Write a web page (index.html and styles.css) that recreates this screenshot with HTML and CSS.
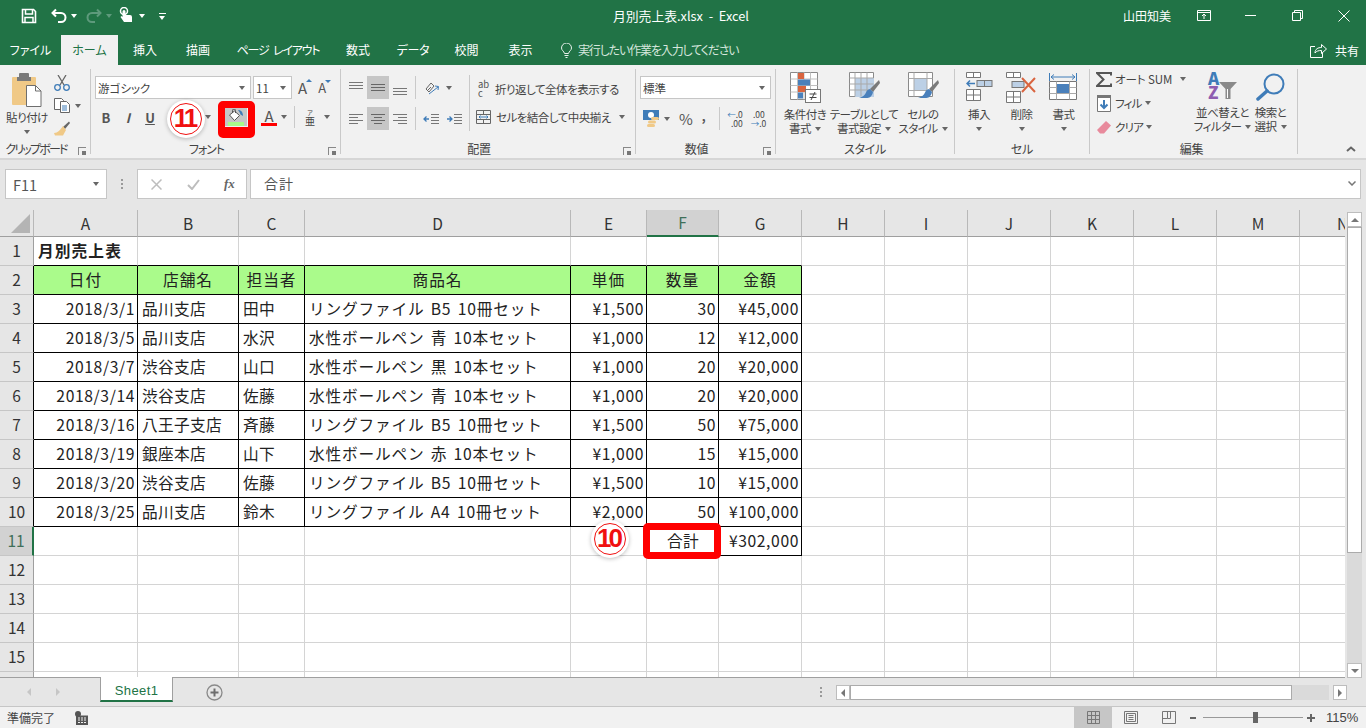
FILE: index.html
```html
<!DOCTYPE html>
<html lang="ja">
<head>
    <meta charset="UTF-8">
    <title>月別売上表.xlsx - Excel</title>
    <link rel="stylesheet" href="styles.css">
</head>
<body>
    <div class="titlebar">
        <div class="qat">
            <svg class="q-save" width="16" height="16" viewBox="0 0 16 16"><path d="M1.500 1.500h11l2 2v11h-13z" fill="none" stroke="#fff" stroke-width="1.600"/><path d="M4.500 2v4h7V2M4 14.500V9.500h8v5" fill="none" stroke="#fff" stroke-width="1.500"/></svg>
            <svg class="q-undo" width="16" height="15" viewBox="0 0 16 15"><path d="M5 1.500 1.500 5 5 8.500M2 5h8a4.500 4.500 0 0 1 0 9H7" fill="none" stroke="#fff" stroke-width="2"/></svg>
            <span class="caret white q-c1"></span>
            <svg class="q-redo" width="16" height="15" viewBox="0 0 16 15"><path d="M11 1.500 14.500 5 11 8.500M14 5H6a4.500 4.500 0 0 0 0 9h3" fill="none" stroke="#5e9a7c" stroke-width="2"/></svg>
            <span class="caret dim q-c2"></span>
            <svg class="q-touch" width="15" height="17" viewBox="0 0 15 17"><circle cx="5" cy="4" r="3.500" fill="none" stroke="#fff" stroke-width="1.500"/><path d="M3.500 4.500a1.500 1.500 0 0 1 3 0V8h4.500a2 2 0 0 1 2 2v5H5L1.500 10l1-1 1 1z" fill="#fff"/></svg>
            <span class="caret white q-c3"></span>
            <span class="q-more"></span>
        </div>
        <div class="doc-title">月別売上表.xlsx&nbsp; - &nbsp;Excel</div>
        <div class="win">
            <span class="user">山田知美</span>
            <svg class="w-ribbon" width="14" height="11" viewBox="0 0 14 11"><path d="M.5.500h13v10H.5zM.5 2.500h13M7 9V4.500M5 6l2-2 2 2" fill="none" stroke="#fff"/></svg>
            <svg class="w-min" width="11" height="11" viewBox="0 0 11 11"><path d="M0 5.500h11" stroke="#fff"/></svg>
            <svg class="w-max" width="11" height="11" viewBox="0 0 11 11"><path d="M.5 2.500h8v8h-8zM2.500 2.500v-2h8v8h-2" fill="none" stroke="#fff"/></svg>
            <svg class="w-close" width="12" height="12" viewBox="0 0 12 12"><path d="M.5.500l11 11M11.500.500l-11 11" stroke="#fff"/></svg>
        </div>
    </div>

    <div class="tabs">
        <span class="tab t-file">ファイル</span>
        <span class="tab active t-home">ホーム</span>
        <span class="tab t-ins">挿入</span>
        <span class="tab t-draw">描画</span>
        <span class="tab t-page">ページ レイアウト</span>
        <span class="tab t-calc">数式</span>
        <span class="tab t-data">データ</span>
        <span class="tab t-rev">校閲</span>
        <span class="tab t-view">表示</span>
        <svg class="bulb" width="11" height="15" viewBox="0 0 11 15"><path d="M3.500 10.500C3 8 .5 7.500.5 5a5 5 0 0 1 10 0c0 2.500-2.500 3-3 5.500zM3.500 12.500h4M4.500 14.500h2" fill="none" stroke="#fff"/></svg>
        <span class="tell">実行したい作業を入力してください</span>
        <span class="share">
            <svg width="17" height="15" viewBox="0 0 17 15"><path d="M5 3.500H.5v11h12V10M5 10c0-4 3-5.500 6.500-5.500V1.500l5 4.500-5 4.500V7.500C8.500 7.500 6.500 8 5 10z" fill="none" stroke="#fff"/></svg>
            共有
        </span>
    </div>

    <div class="ribbon">
        <div class="group g-clip">
            <div class="g-body">
                <div class="paste">
                    <svg width="30" height="34" viewBox="0 0 30 34"><rect x="0" y="4" width="24" height="28" rx="1" fill="#f0c987"/><rect x="7" y="0" width="10" height="7" rx="1" fill="#7a7a7a"/><rect x="5" y="4" width="14" height="4" fill="#7a7a7a"/><path d="M14.500 12.500h9l5.500 5.500v15.500H14.500z" fill="#fff" stroke="#6e6e6e"/><path d="M23.500 12.500V18H29" fill="none" stroke="#6e6e6e"/></svg>
                    <span class="big-text">貼り付け</span>
                    <span class="caret"></span>
                </div>
                <div class="clip-tools">
                    <div class="clip-row"><svg width="16" height="16" viewBox="0 0 16 16"><path d="M4 0l6 10M12 0L6 10" stroke="#666" stroke-width="1.300" fill="none"/><circle cx="3.500" cy="12.500" r="2.800" fill="none" stroke="#3f7cb8" stroke-width="1.300"/><circle cx="12.500" cy="12.500" r="2.800" fill="none" stroke="#3f7cb8" stroke-width="1.300"/></svg></div>
                    <div class="clip-row"><svg width="16" height="15" viewBox="0 0 16 15"><path d="M.5.500h7l2 2v9H.5z" fill="#fff" stroke="#666"/><path d="M6.500 3.500h6l3 3v8h-9z" fill="#fff" stroke="#666"/><path d="M8 8h5M8 10h5M8 12h5" stroke="#3f7cb8"/></svg><span class="caret c-copy"></span></div>
                    <div class="clip-row"><svg width="16" height="15" viewBox="0 0 16 15"><path d="M9 6L15 .5l1 1.500L11 8z" fill="#666"/><path d="M9 5l3 4-3 5.500H1L0 12c4 0 6-3 9-7z" fill="#f0c987"/></svg></div>
                </div>
            </div>
            <div class="g-label has-launcher tight">クリップボード<span class="launcher"></span></div>
        </div>

        <div class="group g-font">
            <div class="g-body col">
                <div class="row r1">
                    <div class="select s-name"><span>游ゴシック</span><span class="caret"></span></div>
                    <div class="select s-size"><span>11</span><span class="caret"></span></div>
                    <span class="grow-a">A<i class="up"></i></span>
                    <span class="shrink-a">A<i class="down"></i></span>
                </div>
                <div class="row r2">
                    <span class="fbtn bold">B</span>
                    <span class="fbtn ital">I</span>
                    <span class="fbtn under">U</span>
                    <span class="border-slot"></span>
                    <span class="caret c-border"></span>
                    <div class="fill-btn">
                        <svg width="16" height="13" viewBox="0 0 16 13"><path d="M1.500 6 6.500 2l5 4.500-5 5z" fill="#fff" stroke="#555"/><path d="M4.500 4V1.500a1.500 1.500 0 0 1 3 0V4" fill="none" stroke="#555"/><path d="M10 1c3 0 5 2 5 6l-2.500-1.500C12 3.500 11 2.500 10 1z" fill="#3f7cb8"/></svg>
                        <span class="fill-bar"></span>
                    </div>
                    <span class="font-color">A</span>
                    <span class="caret c-fc"></span>
                    <span class="vsep s-f"></span>
                    <span class="phon">亜<i>ア</i></span>
                    <span class="caret c-ph"></span>
                </div>
            </div>
            <div class="g-label has-launcher">フォント<span class="launcher"></span></div>
        </div>

        <div class="group g-align">
            <div class="g-body">
                <div class="col a-left">
                    <div class="row a-r1">
                        <span class="abtn"><svg width="14" height="14" viewBox="0 0 14 14"><path d="M0 1.500h14M0 4.500h14M0 7.500h14" stroke="#777"/></svg></span>
                        <span class="abtn on"><svg width="14" height="14" viewBox="0 0 14 14"><path d="M0 3.500h14M0 6.500h14M0 9.500h14" stroke="#666"/></svg></span>
                        <span class="abtn"><svg width="14" height="14" viewBox="0 0 14 14"><path d="M0 7.500h14M0 10.500h14M0 13.500h14" stroke="#777"/></svg></span>
                        <span class="vsep s-a"></span>
                        <svg class="orient" width="18" height="18" viewBox="0 0 18 18"><path d="M3 10l5-6 3 3-5 6zM5 11l3-3" fill="none" stroke="#666"/><path d="M6 15l9-7M12 7l3.500.5-.5 3.500" fill="none" stroke="#3f7cb8"/></svg>
                        <span class="caret c-or"></span>
                    </div>
                    <div class="row a-r2">
                        <span class="abtn"><svg width="14" height="12" viewBox="0 0 14 12"><path d="M0 1.500h14M0 4.500h9M0 7.500h14M0 10.500h9" stroke="#777"/></svg></span>
                        <span class="abtn on"><svg width="14" height="12" viewBox="0 0 14 12"><path d="M0 1.500h14M3 4.500h8M0 7.500h14M3 10.500h8" stroke="#666"/></svg></span>
                        <span class="abtn"><svg width="14" height="12" viewBox="0 0 14 12"><path d="M0 1.500h14M5 4.500h9M0 7.500h14M5 10.500h9" stroke="#777"/></svg></span>
                        <span class="vsep s-a"></span>
                        <svg class="ind1" width="16" height="12" viewBox="0 0 16 12"><path d="M8 1.500h8M8 4.500h8M8 7.500h8M8 10.500h8" stroke="#777"/><path d="M6 6H1M3.500 3.500 1 6l2.500 2.500" fill="none" stroke="#3f7cb8" stroke-width="1.300"/></svg>
                        <svg class="ind2" width="16" height="12" viewBox="0 0 16 12"><path d="M8 1.500h8M8 4.500h8M8 7.500h8M8 10.500h8" stroke="#777"/><path d="M1 6h5M3.500 3.500 6 6 3.500 8.500" fill="none" stroke="#3f7cb8" stroke-width="1.300"/></svg>
                    </div>
                </div>
                <div class="col a-right">
                    <div class="wrap-row"><span class="abc">ab<br>c</span><span class="r-text">折り返して全体を表示する</span></div>
                    <div class="merge-row"><svg width="15" height="14" viewBox="0 0 15 14"><path d="M.5.500h14v13H.5zM.5 4.500h14M.5 9.500h14M7.500.500v4M7.500 9.500v4" fill="none" stroke="#666"/><path d="M3 7h9M4.500 5.500 3 7l1.500 1.500M10.500 5.500 12 7l-1.500 1.500" fill="none" stroke="#3f7cb8"/></svg><span class="r-text">セルを結合して中央揃え</span><span class="caret c-merge"></span></div>
                </div>
            </div>
            <div class="g-label has-launcher">配置<span class="launcher"></span></div>
        </div>

        <div class="group g-num">
            <div class="g-body col">
                <div class="row r1">
                    <div class="select s-fmt"><span>標準</span><span class="caret"></span></div>
                </div>
                <div class="row n-r2">
                    <svg class="money" width="17" height="17" viewBox="0 0 17 17"><path d="M0 0h16v10H0z" fill="#3f7cb8"/><circle cx="8" cy="5" r="3" fill="#fff"/><rect x="8" y="7" width="8" height="3" rx="1.500" fill="#f0c987"/><rect x="5" y="10.500" width="8" height="3" rx="1.500" fill="#f0c987"/><rect x="4" y="14" width="8" height="3" rx="1.500" fill="#f0c987"/></svg>
                    <span class="caret c-money"></span>
                    <span class="pct">%</span>
                    <span class="comma">,</span>
                    <span class="vsep s-n"></span>
                    <span class="dec d1"><i class="arrow-l">←</i>.0<br>.00</span>
                    <span class="dec d2">.00<br><i class="arrow-r">→</i>.0</span>
                </div>
            </div>
            <div class="g-label has-launcher">数値<span class="launcher"></span></div>
        </div>

        <div class="group g-style">
            <div class="g-body">
                <div class="big b-cond">
                    <svg width="31" height="31" viewBox="0 0 31 31"><path d="M.5.500h27v27H.5z" fill="#fff" stroke="#8a8a8a"/><path d="M.5 7h27M.5 13.500h27M.5 20h27M7.500.500v27M14 .500v27M20.500.500v27" stroke="#c0c0c0"/><rect x="8" y="1" width="6" height="6" fill="#d9643f"/><rect x="8" y="7.500" width="12" height="6" fill="#4a80bb"/><rect x="8" y="14" width="8" height="6" fill="#d9643f"/><rect x="8" y="20.500" width="5" height="6" fill="#4a80bb"/><rect x="15.500" y="17.500" width="15" height="13" fill="#fff" stroke="#777"/><path d="M19.500 22h7M19.500 25.500h7M25 20l-4 8" stroke="#444"/></svg>
                    <span class="big-text">条件付き<br>書式<span class="caret inl"></span></span>
                </div>
                <div class="big b-table">
                    <svg width="31" height="31" viewBox="0 0 31 31"><path d="M.5.500h24v24H.5z" fill="#fff" stroke="#8a8a8a"/><rect x="6" y="6" width="19" height="19" fill="#bcd0e6"/><path d="M.5 6h24M.5 12h24M.5 18h24M6 .500v24M12 .500v24M18 .500v24" stroke="#a9a9a9"/><path d="M30 8l-9 9 3 3 7-9z" fill="#7a7a7a"/><path d="M21 17l3 3c-1 5-4 6-6.500 6H10c4-1 6-3 7-5.500 1-2.500 2-3 4-3.500z" fill="#4a80bb"/></svg>
                    <span class="big-text">テーブルとして<br>書式設定<span class="caret inl"></span></span>
                </div>
                <div class="big b-cell">
                    <svg width="31" height="31" viewBox="0 0 31 31"><path d="M.5.500h24v24H.5z" fill="#fff" stroke="#8a8a8a"/><rect x="6" y="7" width="13" height="11" fill="#bcd0e6"/><path d="M6 .500v24M.5 6.500h24M.5 18.500h24M19 .500v24" stroke="#a9a9a9"/><path d="M30 8l-9 9 3 3 7-9z" fill="#7a7a7a"/><path d="M21 17l3 3c-1 5-4 6-6.500 6H10c4-1 6-3 7-5.500 1-2.500 2-3 4-3.500z" fill="#4a80bb"/></svg>
                    <span class="big-text">セルの<br>スタイル<span class="caret inl"></span></span>
                </div>
            </div>
            <div class="g-label">スタイル</div>
        </div>

        <div class="group g-cell">
            <div class="g-body">
                <div class="big b-ins">
                    <svg width="27" height="31" viewBox="0 0 27 31"><path d="M.5.500h14v5H.5zM7.500.500v5M.5 17.500h14v11H.5zM.5 23h14M7.500 17.500v11" fill="#fff" stroke="#777"/><rect x="11" y="8.500" width="15" height="6" fill="#bcd0e6" stroke="#777"/><path d="M18.500 8.500v6" stroke="#777"/><path d="M9 11.500H1M4 8.500l-3 3 3 3" fill="none" stroke="#3f7cb8" stroke-width="1.500"/></svg>
                    <span class="big-text">挿入</span>
                    <span class="caret"></span>
                </div>
                <div class="big b-del">
                    <svg width="31" height="31" viewBox="0 0 31 31"><path d="M.5.500h14v5H.5zM7.500.500v5M.5 19.500h14v11H.5zM.5 25h14M7.500 19.500v11" fill="#fff" stroke="#777"/><rect x="6" y="9.500" width="12" height="6" fill="#bcd0e6" stroke="#777"/><path d="M16 6l13 14M29 6L16 20" stroke="#d9643f" stroke-width="2"/></svg>
                    <span class="big-text">削除</span>
                    <span class="caret"></span>
                </div>
                <div class="big b-fmt">
                    <svg width="29" height="31" viewBox="0 0 29 31"><path d="M2 5h24M2 5l3-2.500M2 5l3 2.500M26 5l-3-2.500M26 5l-3 2.500" fill="none" stroke="#3f7cb8"/><path d="M.5 1v8M27.500 1v8" stroke="#3f7cb8"/><path d="M.5 9.500h27v18H.5z" fill="#fff" stroke="#777"/><path d="M7.500 9.500v18M20.500 9.500v18M.5 15.500h27M.5 21.500h27" stroke="#a9a9a9"/><rect x="8" y="12" width="12" height="9" fill="#4a80bb"/></svg>
                    <span class="big-text">書式</span>
                    <span class="caret"></span>
                </div>
            </div>
            <div class="g-label">セル</div>
        </div>

        <div class="group g-edit">
            <div class="g-body">
                <div class="edit-col">
                    <div class="edit-row"><svg width="16" height="15" viewBox="0 0 16 15"><path d="M15 3.500V1H1l6.500 6.500L1 14h14v-2.500" fill="none" stroke="#555" stroke-width="2"/></svg><span class="e-text">オート SUM</span><span class="caret c-sum"></span></div>
                    <div class="edit-row"><svg width="14" height="17" viewBox="0 0 14 17"><path d="M.5.500h13v16H.5z" fill="#fff" stroke="#777"/><rect x="0" y="0" width="14" height="3" fill="#777"/><path d="M7 5v8M3.500 9.500 7 13l3.500-3.500" fill="none" stroke="#3f7cb8" stroke-width="2"/></svg><span class="e-text short">フィル</span><span class="caret c-ef"></span></div>
                    <div class="edit-row"><svg width="14" height="13" viewBox="0 0 14 13"><path d="M0 9l9-9 5 4.500-7 8H3z" fill="#e88a9c"/></svg><span class="e-text short">クリア</span><span class="caret c-ef"></span></div>
                </div>
                <div class="big b-sort">
                    <div class="sort-ico"><span class="az"><b class="a">A</b><b class="z">Z</b></span><svg width="18" height="17" viewBox="0 0 18 17"><path d="M0 0h18l-6.500 7v10h-5V7z" fill="#8a8a8a"/><path d="M8.500 7v9" stroke="#fff"/></svg></div>
                    <span class="big-text">並べ替えと<br>フィルター<span class="caret inl"></span></span>
                </div>
                <div class="big b-find">
                    <svg width="29" height="28" viewBox="0 0 29 28"><circle cx="18" cy="11" r="9.500" fill="none" stroke="#3f7cb8" stroke-width="2"/><path d="M11 18 2 26" stroke="#3f7cb8" stroke-width="3.500" stroke-linecap="round"/></svg>
                    <span class="big-text">検索と<br>選択<span class="caret inl"></span></span>
                </div>
            </div>
            <div class="g-label">編集</div>
        </div>
        <svg class="collapse" width="10" height="6" viewBox="0 0 10 6"><path d="M1 5l4-3.500L9 5" fill="none" stroke="#666" stroke-width="2"/></svg>
    </div>

    <div class="formula">
        <div class="namebox"><span>F11</span><span class="caret"></span></div>
        <span class="grip"></span>
        <div class="fx-btns">
            <svg width="11" height="11" viewBox="0 0 11 11"><path d="M.5.500l10 10M10.500.500l-10 10" stroke="#bdbdbd" stroke-width="1.500"/></svg>
            <svg width="13" height="11" viewBox="0 0 13 11"><path d="M1 6l4 4 7-9" fill="none" stroke="#bdbdbd" stroke-width="2"/></svg>
            <span class="fx">fx</span>
        </div>
        <div class="fbar"><span>合計</span><svg width="8" height="5" viewBox="0 0 8 5"><path d="M.5.500 4 4 7.500.500" fill="none" stroke="#777" stroke-width="1.500"/></svg></div>
    </div>

    <div class="sheet-area">
        <div class="sheet">
            <table>
                <colgroup>
                    <col class="w-rh"><col class="w-a"><col class="w-b"><col class="w-c"><col class="w-d"><col class="w-e"><col class="w-f"><col class="w-g">
                    <col class="w-x"><col class="w-x"><col class="w-x"><col class="w-x"><col class="w-x"><col class="w-x"><col class="w-n">
                </colgroup>
                <thead>
                    <tr>
                        <th class="corner"><span class="tri"></span></th>
                        <th>A</th><th>B</th><th>C</th><th>D</th><th>E</th><th class="cur-col">F</th><th>G</th>
                        <th>H</th><th>I</th><th>J</th><th>K</th><th>L</th><th>M</th><th class="col-n">N</th>
                    </tr>
                </thead>
                <tbody>
                    <tr><th class="rh">1</th><td class="bb title-cell">月別売上表</td><td class="bb"></td><td class="bb"></td><td class="bb"></td><td class="bb"></td><td class="bb"></td><td class="bb"></td><td></td><td></td><td></td><td></td><td></td><td></td><td class="last"></td></tr>
                    <tr class="head"><th class="rh bl">2</th><td class="box">日付</td><td class="box">店舗名</td><td class="box">担当者</td><td class="box">商品名</td><td class="box">単価</td><td class="box">数量</td><td class="box">金額</td><td></td><td></td><td></td><td></td><td></td><td></td><td class="last"></td></tr>
                    <tr><th class="rh bl">3</th><td class="box num">2018/3/1</td><td class="box">品川支店</td><td class="box">田中</td><td class="box item">リングファイル B5 10冊セット</td><td class="box num">¥1,500</td><td class="box num">30</td><td class="box num">¥45,000</td><td></td><td></td><td></td><td></td><td></td><td></td><td class="last"></td></tr>
                    <tr><th class="rh bl">4</th><td class="box num">2018/3/5</td><td class="box">品川支店</td><td class="box">水沢</td><td class="box item">水性ボールペン 青 10本セット</td><td class="box num">¥1,000</td><td class="box num">12</td><td class="box num">¥12,000</td><td></td><td></td><td></td><td></td><td></td><td></td><td class="last"></td></tr>
                    <tr><th class="rh bl">5</th><td class="box num">2018/3/7</td><td class="box">渋谷支店</td><td class="box">山口</td><td class="box item">水性ボールペン 黒 10本セット</td><td class="box num">¥1,000</td><td class="box num">20</td><td class="box num">¥20,000</td><td></td><td></td><td></td><td></td><td></td><td></td><td class="last"></td></tr>
                    <tr><th class="rh bl">6</th><td class="box num">2018/3/14</td><td class="box">渋谷支店</td><td class="box">佐藤</td><td class="box item">水性ボールペン 青 10本セット</td><td class="box num">¥1,000</td><td class="box num">20</td><td class="box num">¥20,000</td><td></td><td></td><td></td><td></td><td></td><td></td><td class="last"></td></tr>
                    <tr><th class="rh bl">7</th><td class="box num">2018/3/16</td><td class="box">八王子支店</td><td class="box">斉藤</td><td class="box item">リングファイル B5 10冊セット</td><td class="box num">¥1,500</td><td class="box num">50</td><td class="box num">¥75,000</td><td></td><td></td><td></td><td></td><td></td><td></td><td class="last"></td></tr>
                    <tr><th class="rh bl">8</th><td class="box num">2018/3/19</td><td class="box">銀座本店</td><td class="box">山下</td><td class="box item">水性ボールペン 赤 10本セット</td><td class="box num">¥1,000</td><td class="box num">15</td><td class="box num">¥15,000</td><td></td><td></td><td></td><td></td><td></td><td></td><td class="last"></td></tr>
                    <tr><th class="rh bl">9</th><td class="box num">2018/3/20</td><td class="box">渋谷支店</td><td class="box">佐藤</td><td class="box item">リングファイル B5 10冊セット</td><td class="box num">¥1,500</td><td class="box num">10</td><td class="box num">¥15,000</td><td></td><td></td><td></td><td></td><td></td><td></td><td class="last"></td></tr>
                    <tr><th class="rh bl">10</th><td class="box num">2018/3/25</td><td class="box">品川支店</td><td class="box">鈴木</td><td class="box item">リングファイル A4 10冊セット</td><td class="box num">¥2,000</td><td class="box num">50</td><td class="box num">¥100,000</td><td></td><td></td><td></td><td></td><td></td><td></td><td class="last"></td></tr>
                    <tr><th class="rh cur-row">11</th><td></td><td></td><td></td><td></td><td></td><td class="box center">合計</td><td class="box num">¥302,000</td><td></td><td></td><td></td><td></td><td></td><td></td><td class="last"></td></tr>
                    <tr><th class="rh">12</th><td></td><td></td><td></td><td></td><td></td><td></td><td></td><td></td><td></td><td></td><td></td><td></td><td></td><td class="last"></td></tr>
                    <tr><th class="rh">13</th><td></td><td></td><td></td><td></td><td></td><td></td><td></td><td></td><td></td><td></td><td></td><td></td><td></td><td class="last"></td></tr>
                    <tr><th class="rh">14</th><td></td><td></td><td></td><td></td><td></td><td></td><td></td><td></td><td></td><td></td><td></td><td></td><td></td><td class="last"></td></tr>
                    <tr><th class="rh">15</th><td></td><td></td><td></td><td></td><td></td><td></td><td></td><td></td><td></td><td></td><td></td><td></td><td></td><td class="last"></td></tr>
                    <tr><th class="rh"></th><td></td><td></td><td></td><td></td><td></td><td></td><td></td><td></td><td></td><td></td><td></td><td></td><td></td><td class="last"></td></tr>
                </tbody>
            </table>
        </div>
        <div class="vscroll">
            <span class="sb-btn"><i class="tri-up"></i></span>
            <span class="sb-thumb"></span>
            <span class="sb-track"></span>
            <span class="sb-btn"><i class="tri-down"></i></span>
        </div>
    </div>

    <div class="sheetbar">
        <span class="nav"><i class="nav-l"></i><i class="nav-r"></i></span>
        <span class="sheet-tab">Sheet1</span>
        <svg class="add" width="17" height="17" viewBox="0 0 17 17"><circle cx="8.500" cy="8.500" r="7.500" fill="none" stroke="#8a8a8a" stroke-width="1.300"/><path d="M8.500 4.500v8M4.500 8.500h8" stroke="#6e6e6e" stroke-width="2"/></svg>
        <span class="grip g2"></span>
        <div class="hscroll">
            <span class="hb"><i class="nav-l dark"></i></span>
            <span class="h-thumb"></span>
            <span class="h-track"></span>
            <span class="hb"><i class="nav-r dark"></i></span>
        </div>
    </div>

    <div class="status">
        <span class="ready">準備完了</span>
        <svg class="macro" width="13" height="14" viewBox="0 0 13 14"><circle cx="3" cy="3" r="3" fill="#555"/><path d="M1 4.500h12V14H1z" fill="#555"/><path d="M3 7h2M6 7h2M9 7h2M3 9h2M6 9h2M9 9h2M3 11.500h2M6 11.500h2M9 11.500h2" stroke="#f1f1f1"/></svg>
        <div class="views">
            <span class="view on"><svg width="13" height="13" viewBox="0 0 13 13"><path d="M.5.500h12v12H.5zM4.500.500v12M8.500.500v12M.5 4.500h12M.5 8.500h12" fill="none" stroke="#777"/></svg></span>
            <span class="view"><svg width="14" height="13" viewBox="0 0 14 13"><path d="M.5.500h13v12H.5zM2.500 2.500h9v8h-9zM4.500 4.500h5M4.500 6.500h5M4.500 8.500h5" fill="none" stroke="#777"/></svg></span>
            <span class="view"><svg width="14" height="13" viewBox="0 0 14 13"><path d="M.5.500h13v12H.5zM.5 7.500h5v-7M5.500 7.500h3v-7" fill="none" stroke="#777"/></svg></span>
        </div>
        <div class="zoom">
            <i class="z-minus"></i>
            <span class="z-line"><i class="z-thumb"></i></span>
            <svg width="8" height="8" viewBox="0 0 8 8"><path d="M4 0v8M0 4h8" stroke="#666" stroke-width="2"/></svg>
        </div>
        <span class="pctz">115%</span>
    </div>

    <!-- 注釈 -->
    <div class="mark m-fill"></div>
    <div class="mark m-total"></div>
    <div class="badge b11"><span>11</span></div>
    <div class="badge b10"><span>10</span></div>
</body>
</html>
```

FILE: styles.css
```css
* {
    box-sizing: border-box;
}
html, body {
    margin: 0;
    height: 728px;
    overflow: hidden;
}
body {
    position: relative;
    width: 1366px;
    background-color: #e6e6e6;
    color: #444;
    font-family: "Noto Sans CJK JP", "Noto Sans", sans-serif;
    font-size: 12px;
    font-feature-settings: "palt" 1;
}
i {
    font-style: normal;
}

.caret {
    display: inline-block;
    width: 0;
    height: 0;
    border-left: 3.5px solid transparent;
    border-right: 3.5px solid transparent;
    border-top: 4px solid #666;
    flex: none;
}
.caret.white {
    border-top-color: #fff;
}
.caret.dim {
    border-top-color: #5e9a7c;
}
.caret.inl {
    margin-left: 4px;
    vertical-align: 2px;
}

/* title bar */
.titlebar {
    height: 35px;
    background-color: #217346;
    color: #fff;
    display: flex;
    align-items: center;
    justify-content: space-between;
    padding: 0 0 4px 21px;
}
.qat {
    display: flex;
    align-items: center;
    width: 150px;
}
.q-undo { margin-left: 14px; }
.q-c1 { margin-left: 4px; }
.q-redo { margin-left: 9px; }
.q-c2 { margin-left: 4px; }
.q-touch { margin-left: 7px; }
.q-c3 { margin-left: 5px; }
.q-more {
    margin-left: 14px;
    width: 7px;
    height: 6px;
    border-top: 1px solid #fff;
    position: relative;
}
.q-more::after {
    content: "";
    position: absolute;
    left: 0;
    top: 2px;
    border-left: 3.5px solid transparent;
    border-right: 3.5px solid transparent;
    border-top: 4px solid #fff;
}
.doc-title {
    font-size: 12.8px;
    margin-left: 442px;
    white-space: nowrap;
}
.win {
    margin-left: auto;
    display: flex;
    align-items: center;
    padding-right: 16px;
}
.user { font-size: 12px; margin-right: 26px; }
.w-min { margin-left: 34px; }
.w-max { margin-left: 36px; }
.w-close { margin-left: 35px; }

/* tabs */
.tabs {
    height: 30px;
    background-color: #217346;
    color: #fff;
    display: flex;
    align-items: stretch;
    line-height: 29px;
    white-space: nowrap;
}
.tab {
    flex: none;
    text-align: center;
}
.tab.active {
    background-color: #f1f1f1;
    color: #217346;
}
.t-file { width: 61px; }
.t-home { width: 57px; }
.t-ins { width: 54px; }
.t-draw { width: 52px; }
.t-page { width: 102px; margin-left: 3px; letter-spacing: -1.2px; word-spacing: 3px; }
.t-calc { width: 58px; }
.t-data { width: 52px; letter-spacing: -.3px; }
.t-rev { width: 55px; }
.t-view { width: 53px; }
.bulb { margin: 8px 0 0 14px; opacity: .9; }
.tell {
    margin-left: 6px;
    color: #d5e6dc;
    font-size: 12px;
    letter-spacing: -1.15px;
}
.share {
    margin-left: auto;
    padding-right: 7px;
    display: flex;
    align-items: center;
    gap: 8px;
}

/* ribbon */
.ribbon {
    height: 95px;
    padding-top: 4px;
    background-color: #f1f1f1;
    border-bottom: 2px solid #d6d6d6;
    display: flex;
    position: relative;
    color: #444;
}
.group {
    flex: none;
    height: 85px;
    border-right: 1px solid #c9c9c9;
    display: flex;
    flex-direction: column;
}
.g-body {
    height: 73px;
    display: flex;
    flex: none;
}
.g-body.col, .col {
    display: flex;
    flex-direction: column;
}
.g-label {
    height: 14px;
    line-height: 14px;
    font-size: 12px;
    letter-spacing: -.3px;
    text-align: center;
    position: relative;
    white-space: nowrap;
}
.g-label.has-launcher {
    padding-right: 18px;
}
.g-label.tight {
    letter-spacing: -1.8px;
}
.launcher {
    position: absolute;
    right: 4px;
    top: 5px;
    width: 8px;
    height: 8px;
    border-left: 1px solid #888;
    border-top: 1px solid #888;
}
.launcher::after {
    content: "";
    position: absolute;
    right: 0;
    bottom: 0;
    width: 4px;
    height: 4px;
    background-color: #777;
}
.row {
    display: flex;
    align-items: center;
}
.r1 {
    margin-top: 7px;
    height: 23px;
}
.vsep {
    width: 1px;
    background-color: #c9c9c9;
    flex: none;
}
.big-text {
    font-size: 11.5px;
    letter-spacing: -.5px;
    line-height: 14px;
    text-align: center;
    white-space: nowrap;
    color: #444;
}
.big {
    display: flex;
    flex-direction: column;
    align-items: center;
    flex: none;
}
.big svg {
    flex: none;
}
.big .caret {
    margin-top: 6px;
}
.big .caret.inl {
    margin-top: 0;
}
.select {
    background-color: #fff;
    border: 1px solid #c6c6c6;
    height: 23px;
    display: flex;
    align-items: center;
    justify-content: space-between;
    padding: 0 5px 0 2px;
    font-size: 11.5px;
    flex: none;
}

/* clipboard */
.g-clip { width: 91px; }
.paste {
    width: 48px;
    margin-left: 3px;
    padding-top: 4px;
    display: flex;
    flex-direction: column;
    align-items: center;
}
.paste .big-text { margin-top: 3px; }
.paste .caret { margin-top: 6px; }
.clip-tools {
    padding: 2px 0 0 3px;
}
.clip-row {
    height: 23px;
    display: flex;
    align-items: center;
}
.c-copy { margin-left: 5px; }

/* font */
.g-font { width: 250px; }
.g-font .g-body { padding-left: 4px; }
.g-font .g-label { letter-spacing: -1px; }
.s-name { width: 156px; }
.s-size { width: 39px; margin-left: 2px; }
.grow-a, .shrink-a {
    font-size: 15px;
    position: relative;
    color: #555;
}
.grow-a { margin-left: 6px; }
.shrink-a { margin-left: 11px; font-size: 13px; }
.grow-a i, .shrink-a i {
    position: absolute;
    right: -5px;
    top: 2px;
    border-left: 3px solid transparent;
    border-right: 3px solid transparent;
}
.grow-a .up { border-bottom: 3px solid #3f7cb8; }
.shrink-a .down { border-top: 3px solid #3f7cb8; }
.r2 {
    margin-top: 9px;
    height: 18px;
}
.fbtn {
    width: 22px;
    text-align: center;
    font-size: 13px;
    color: #555;
    flex: none;
}
.bold { font-weight: 700; }
.ital { font-style: italic; font-weight: 700; }
.under { font-weight: 700; text-decoration: underline; }
.border-slot { width: 44px; flex: none; }
.fill-btn {
    width: 23px;
    height: 18px;
    margin-left: 13px;
    background-color: #c6c6c6;
    display: flex;
    flex-direction: column;
    align-items: center;
    justify-content: space-between;
    padding-top: 1px;
    flex: none;
}
.fill-bar {
    width: 16px;
    height: 4px;
    background-color: #a9fa8a;
    flex: none;
}
.font-color {
    width: 16px;
    height: 18px;
    margin-left: 14px;
    text-align: center;
    font-size: 15px;
    line-height: 15px;
    color: #555;
    border-bottom: 3px solid #ff0000;
    flex: none;
}
.c-fc { margin-left: 4px; }
.s-f { height: 22px; margin-left: 7px; }
.phon {
    margin-left: 9px;
    font-size: 10px;
    line-height: 10px;
    width: 12px;
    display: flex;
    flex-direction: column-reverse;
    align-items: center;
}
.phon i { font-size: 6px; line-height: 7px; }
.c-ph { margin-left: 8px; }

/* alignment */
.g-align { width: 295px; }
.a-left {
    width: 128px;
    padding-left: 4px;
}
.a-r1 {
    margin-top: 7px;
    height: 23px;
}
.a-r2 {
    margin-top: 8px;
    height: 23px;
}
.abtn {
    width: 22px;
    height: 23px;
    display: flex;
    align-items: center;
    justify-content: center;
    flex: none;
}
.abtn.on { background-color: #c6c6c6; }
.s-a { height: 23px; margin-left: 4px; }
.orient { margin-left: 7px; }
.c-or { margin-left: 5px; }
.ind1 { margin-left: 7px; }
.ind2 { margin-left: 7px; }
.a-right {
    margin-top: 6px;
    height: 56px;
    border-left: 1px solid #c9c9c9;
    padding-left: 6px;
    white-space: nowrap;
}
.wrap-row, .merge-row {
    display: flex;
    align-items: center;
    height: 28px;
}
.wrap-row { padding-left: 2px; }
.r-text {
    font-size: 11.5px;
    letter-spacing: -.5px;
}
.abc {
    font-size: 9.5px;
    line-height: 9px;
    width: 17px;
    color: #555;
}
.merge-row svg { margin-right: 5px; flex: none; }
.c-merge { margin-left: 8px; }

/* number */
.g-num { width: 140px; }
.g-num .g-body { padding-left: 4px; }
.s-fmt { width: 131px; }
.n-r2 {
    margin-top: 8px;
    height: 23px;
}
.money { margin-left: 3px; }
.c-money { margin-left: 4px; }
.pct { margin-left: 9px; font-size: 15px; color: #555; }
.comma { margin-left: 9px; font-size: 12px; font-weight: 700; color: #555; line-height: 12px; margin-bottom: 6px; }
.s-n { height: 23px; margin-left: 13px; }
.dec {
    font-size: 8.5px;
    line-height: 9px;
    white-space: nowrap;
    color: #444;
}
.d1 { margin-left: 7px; text-align: right; width: 16px; }
.d2 { margin-left: 8px; text-align: right; width: 14px; }
.arrow-l, .arrow-r { color: #3f7cb8; }

/* styles */
.g-style { width: 179px; }
.g-style .g-body { padding: 3px 0 0 2px; }
.big .big-text { margin-top: 4px; }
.b-cond { width: 54px; }
.b-table { width: 64px; }
.b-cell { width: 54px; }

/* cells */
.g-cell { width: 135px; }
.g-cell .g-body { padding: 3px 0 0 3px; }
.b-ins { width: 42px; }
.b-del { width: 43px; }
.b-fmt { width: 41px; }

/* editing */
.g-edit { width: 208px; }
.g-edit .g-label { padding-right: 4px; }
.edit-col {
    width: 105px;
    margin-top: -2px;
    padding-left: 6px;
    flex: none;
}
.edit-row {
    height: 24px;
    display: flex;
    align-items: center;
    white-space: nowrap;
}
.edit-row svg { width: 16px; flex: none; }
.e-text { margin-left: 3px; font-size: 11.5px; letter-spacing: -.1px; }
.e-text.short { letter-spacing: -.8px; }
.c-sum { margin-left: 8px; }
.c-ef { margin-left: 3px; }
.b-sort { width: 55px; padding-top: 4px; }
.b-find { width: 41px; padding-top: 4px; }
.sort-ico {
    display: flex;
    align-items: flex-end;
    height: 28px;
    padding-bottom: 2px;
}
.az {
    display: flex;
    flex-direction: column;
    font-size: 17px;
    line-height: 14px;
    font-weight: 700;
}
.az .a { color: #3f7cb8; }
.az .z { color: #8e5db0; }
.b-sort .big-text { margin-top: 4px; }
.collapse {
    position: absolute;
    left: 1346px;
    top: 81px;
}

/* formula bar */
.formula {
    height: 50px;
    padding: 9px 5px 11px 5px;
    display: flex;
    background-color: #e6e6e6;
}
.namebox {
    width: 102px;
    background-color: #fff;
    border: 1px solid #c6c6c6;
    display: flex;
    align-items: center;
    justify-content: space-between;
    padding: 0 7px 0 7px;
    font-size: 14.5px;
    color: #555;
}
.grip {
    width: 2px;
    height: 10px;
    margin: 10px 14px 0 14px;
    background: repeating-linear-gradient(#9a9a9a 0 2px, transparent 2px 4px);
    flex: none;
}
.fx-btns {
    width: 110px;
    background-color: #fff;
    border: 1px solid #c6c6c6;
    display: flex;
    align-items: center;
    padding-left: 13px;
    gap: 25px;
    flex: none;
}
.fx {
    font-family: "Liberation Serif", serif;
    font-style: italic;
    font-weight: 700;
    color: #666;
    font-size: 13px;
    margin-left: -1px;
}
.fbar {
    flex: 1;
    margin-left: 3px;
    background-color: #fff;
    border: 1px solid #c6c6c6;
    display: flex;
    align-items: center;
    justify-content: space-between;
    padding: 0 4px 2px 13px;
    font-size: 14px;
    letter-spacing: 1px;
    color: #555;
}

/* sheet */
.sheet-area {
    height: 468px;
    display: flex;
}
.sheet {
    width: 1345px;
    height: 468px;
    overflow: hidden;
    background-color: #fff;
    border-bottom: 1px solid #9f9f9f;
    flex: none;
}
table {
    border-collapse: separate;
    border-spacing: 0;
    table-layout: fixed;
    width: 1345px;
}
.w-rh { width: 34px; }
.w-a { width: 104px; }
.w-b { width: 101px; }
.w-c { width: 66px; }
.w-d { width: 266px; }
.w-e { width: 76px; }
.w-f { width: 72px; }
.w-g { width: 83px; }
.w-x { width: 83px; }
.w-n { width: 46px; }
thead th {
    height: 27px;
    padding: 0;
    background-color: #e6e6e6;
    border-right: 1px solid #b8b8b8;
    border-bottom: 1px solid #9f9f9f;
    font-weight: 400;
    font-size: 15.5px;
    color: #333;
    line-height: 25px;
}
.corner {
    position: relative;
}
.tri {
    position: absolute;
    right: 3px;
    bottom: 3px;
    border-left: 19px solid transparent;
    border-bottom: 19px solid #b4b4b4;
}
thead th.cur-col {
    background-color: #d2d2d2;
    border-bottom: 2px solid #217346;
    color: #3f6f59;
}
thead .col-n {
    text-align: left;
    padding-left: 37px;
    overflow: hidden;
    border-right: 0;
    white-space: nowrap;
}
tbody tr {
    height: 29px;
}
tbody th.rh {
    padding: 0 0 2px;
    background-color: #e6e6e6;
    border-right: 1px solid #9f9f9f;
    border-bottom: 1px solid #c6c6c6;
    font-weight: 400;
    font-size: 15.5px;
    color: #333;
}
tbody th.bl {
    border-right-color: #000;
}
tbody th.cur-row {
    background-color: #d2d2d2;
    border-right: 2px solid #217346;
    color: #3f6f59;
}
td {
    height: 29px;
    padding: 0 3px 1px 4px;
    border-right: 1px solid #d4d4d4;
    border-bottom: 1px solid #d4d4d4;
    font-size: 15.7px;
    font-feature-settings: normal;
    letter-spacing: .3px;
    color: #222;
    white-space: nowrap;
    overflow: visible;
}
td.last {
    border-right: 1px solid #9f9f9f;
}
td.bb {
    border-bottom-color: #000;
}
td.box {
    border-right-color: #000;
    border-bottom-color: #000;
}
td.item {
    letter-spacing: .8px;
    word-spacing: 2px;
}
.title-cell {
    font-weight: 700;
    letter-spacing: 1.1px;
}
.head td {
    background-color: #aafb8b;
    text-align: center;
    padding: 0 0 1px;
    letter-spacing: 1px;
}
.head td:nth-child(n+9) {
    background-color: #fff;
}
td.num {
    text-align: right;
    letter-spacing: .6px;
    padding-right: 2px;
}
.center {
    text-align: center;
}

/* scrollbars */
.vscroll {
    width: 15px;
    margin: 2px 0 0 2px;
    display: flex;
    flex-direction: column;
}
.sb-btn {
    height: 15px;
    background-color: #fff;
    border: 1px solid #bdbdbd;
    display: flex;
    align-items: center;
    justify-content: center;
    flex: none;
}
.tri-up {
    border-left: 4px solid transparent;
    border-right: 4px solid transparent;
    border-bottom: 4px solid #777;
}
.tri-down {
    border-left: 4px solid transparent;
    border-right: 4px solid transparent;
    border-top: 4px solid #777;
}
.sb-thumb {
    height: 326px;
    background-color: #fff;
    border: 1px solid #ababab;
    flex: none;
}
.sb-track {
    flex: 1;
    background-color: #dadada;
}

/* sheet tabs */
.sheetbar {
    height: 28px;
    display: flex;
    background-color: #e6e6e6;
}
.nav {
    width: 100px;
    display: flex;
    align-items: center;
    padding: 0 0 0 27px;
    gap: 25px;
    flex: none;
}
.nav-l {
    border-top: 4px solid transparent;
    border-bottom: 4px solid transparent;
    border-right: 4px solid #c6c6c6;
}
.nav-r {
    border-top: 4px solid transparent;
    border-bottom: 4px solid transparent;
    border-left: 4px solid #c6c6c6;
}
.nav-l.dark { border-right-color: #777; }
.nav-r.dark { border-left-color: #777; }
.sheet-tab {
    width: 73px;
    height: 25px;
    margin-top: -1px;
    background-color: #fff;
    border-left: 1px solid #9f9f9f;
    border-right: 1px solid #9f9f9f;
    border-bottom: 2px solid #217346;
    color: #217346;
    font-family: "Liberation Sans", sans-serif;
    font-size: 13px;
    text-align: center;
    line-height: 27px;
    letter-spacing: .4px;
    flex: none;
}
.add {
    margin: 6px 0 0 33px;
    flex: none;
}
.sheetbar .g2 {
    margin: 9px 14px 0 597px;
}
.hscroll {
    margin: 7px 0 0 0;
    width: 511px;
    height: 15px;
    display: flex;
    flex: none;
}
.hb {
    width: 14px;
    background-color: #fff;
    border: 1px solid #bdbdbd;
    display: flex;
    align-items: center;
    justify-content: center;
    flex: none;
}
.h-thumb {
    width: 442px;
    background-color: #fff;
    border: 1px solid #ababab;
    flex: none;
}
.h-track {
    width: 37px;
    background-color: #dadada;
    margin-right: 4px;
    flex: none;
}

/* status bar */
.status {
    height: 22px;
    background-color: #f1f1f1;
    border-top: 1px solid #c6c6c6;
    display: flex;
    align-items: center;
    padding-left: 7px;
    font-size: 12px;
}
.ready {
    width: 68px;
}
.macro {
    flex: none;
}
.views {
    margin-left: 986px;
    height: 21px;
    display: flex;
    flex: none;
}
.view {
    width: 38px;
    display: flex;
    align-items: center;
    justify-content: center;
}
.view.on {
    background-color: #c6c6c6;
}
.zoom {
    margin-left: 2px;
    display: flex;
    align-items: center;
    flex: none;
}
.z-minus {
    width: 6px;
    height: 2px;
    background-color: #666;
}
.z-line {
    width: 100px;
    height: 1px;
    margin: 0 4px 0 7px;
    background-color: #999;
    position: relative;
}
.z-thumb {
    position: absolute;
    left: 50px;
    top: -5px;
    width: 5px;
    height: 11px;
    background-color: #666;
}
.pctz {
    margin-left: 11px;
    font-size: 13px;
    font-family: "Liberation Sans", sans-serif;
}

/* annotations */
.mark {
    position: absolute;
    border: 7px solid #ff0000;
    border-radius: 5px;
}
.m-fill {
    left: 218px;
    top: 101px;
    width: 37px;
    height: 37px;
    border-bottom-width: 11px;
}
.m-total {
    left: 643px;
    top: 523px;
    width: 78px;
    height: 36px;
}
.badge {
    position: absolute;
    width: 38px;
    height: 38px;
    border-radius: 50%;
    background-color: #fff;
    box-shadow: 0 1px 4px rgba(0, 0, 0, .25);
    display: flex;
    align-items: center;
    justify-content: center;
}
.badge span {
    width: 32px;
    height: 32px;
    border: 1.5px solid #f01010;
    border-radius: 50%;
    color: #f01010;
    font-family: "Liberation Sans", sans-serif;
    font-size: 26px;
    font-weight: 700;
    line-height: 29px;
    letter-spacing: -3px;
    text-align: center;
    padding-right: 3px;
}
.b11 {
    left: 167px;
    top: 100px;
}
.b10 {
    left: 591px;
    top: 520px;
}
```
